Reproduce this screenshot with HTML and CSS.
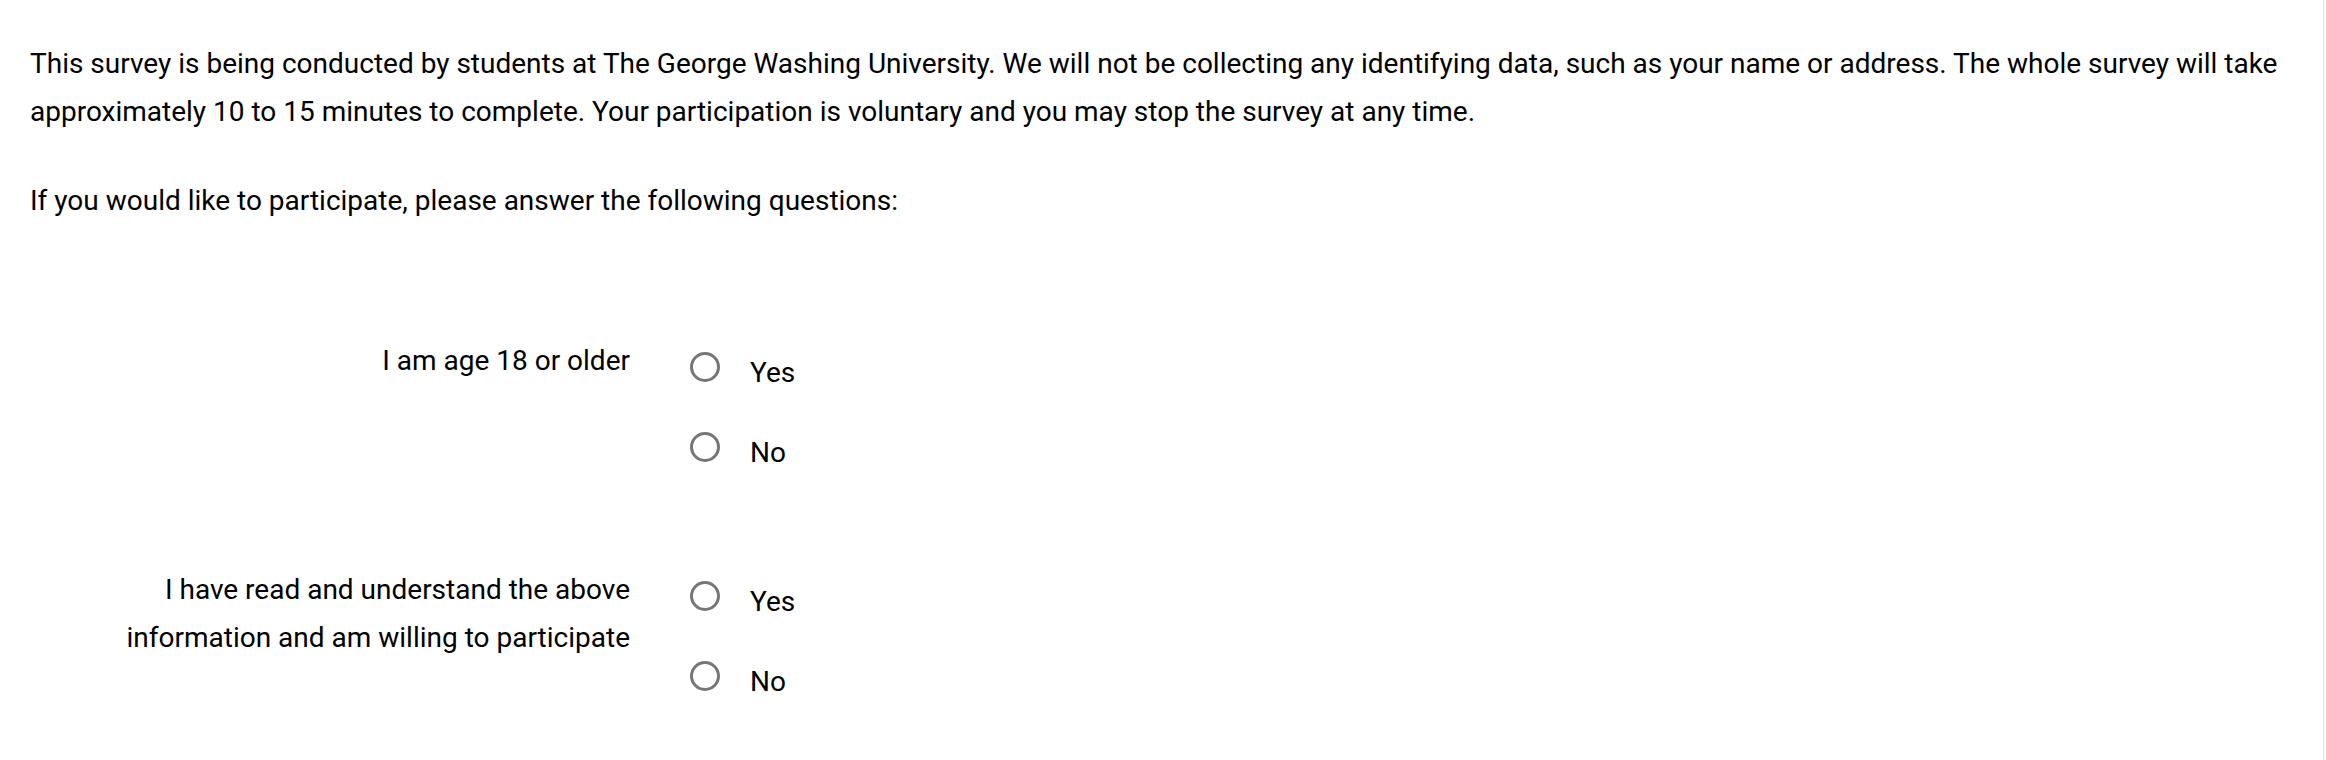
FILE: index.html
```html
<!DOCTYPE html>
<html lang="en">
<head>
<meta charset="utf-8">
<title>Survey</title>
<link rel="stylesheet" href="styles.css">
</head>
<body>
<div class="page">
  <p class="intro">This survey is being conducted by students at The George Washing University. We will not be collecting any identifying data, such as your name or address. The whole survey will take approximately 10 to 15 minutes to complete. Your participation is voluntary and you may stop the survey at any time.</p>
  <p class="intro second">If you would like to participate, please answer the following questions:</p>

  <div class="question q1">
    <div class="qlabel">I am age 18 or older</div>
    <div class="options">
      <label class="option"><span class="radio"></span><span class="otext">Yes</span></label>
      <label class="option"><span class="radio"></span><span class="otext">No</span></label>
    </div>
  </div>

  <div class="question q2">
    <div class="qlabel">I have read and understand the above information and am willing to participate</div>
    <div class="options">
      <label class="option"><span class="radio"></span><span class="otext">Yes</span></label>
      <label class="option"><span class="radio"></span><span class="otext">No</span></label>
    </div>
  </div>
</div>
</body>
</html>
```

FILE: styles.css
```css
html, body {
  margin: 0;
  padding: 0;
  background: #ffffff;
}

body {
  font-family: Roboto, "Liberation Sans", Arial, sans-serif;
  font-size: 28px;
  line-height: 48px;
  color: #000000;
}

.page {
  box-sizing: border-box;
  width: 2324px;
  height: 760px;
  overflow: hidden;
  padding: 40px 40px 0 30px;
  border-right: 1px solid #e2e2e2;
}

.intro {
  margin: 0;
}

.intro.second {
  margin-top: 41px;
}

.question {
  display: flex;
  align-items: flex-start;
  padding-left: 60px;
}

.q1 {
  margin-top: 112px;
}

.q2 {
  margin-top: 89px;
}

.qlabel {
  width: 540px;
  text-align: right;
  flex: none;
}

.options {
  display: flex;
  flex-direction: column;
  gap: 20px;
  margin-left: 60px;
}

.option {
  display: flex;
  align-items: center;
  height: 60px;
}

.radio {
  box-sizing: border-box;
  width: 30px;
  height: 30px;
  border: 3px solid #767676;
  border-radius: 50%;
  flex: none;
}

.otext {
  margin-left: 30px;
  padding-top: 11px;
}
```
